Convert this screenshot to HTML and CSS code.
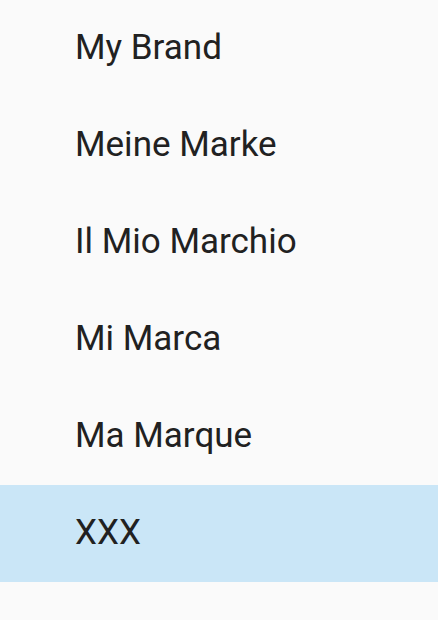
FILE: index.html
```html
<!DOCTYPE html>
<html>
<head>
<meta charset="utf-8">
<link rel="stylesheet" href="styles.css">
</head>
<body>
<ul class="list">
  <li class="item">My Brand</li>
  <li class="item">Meine Marke</li>
  <li class="item">Il Mio Marchio</li>
  <li class="item">Mi Marca</li>
  <li class="item">Ma Marque</li>
  <li class="item selected">XXX</li>
</ul>
</body>
</html>
```
FILE: styles.css
```css
html, body {
  margin: 0;
  padding: 0;
  background: #fafafa;
  height: 100%;
}
.list {
  list-style: none;
  margin: 0;
  padding: 0;
  font-family: Roboto, "Noto Sans", sans-serif;
  font-size: 35px;
  color: #212121;
}
.item {
  height: 97px;
  box-sizing: border-box;
  display: flex;
  align-items: center;
  padding-left: 75px;
  padding-bottom: 2px;
}
.selected {
  background: #cae6f7;
}
```
